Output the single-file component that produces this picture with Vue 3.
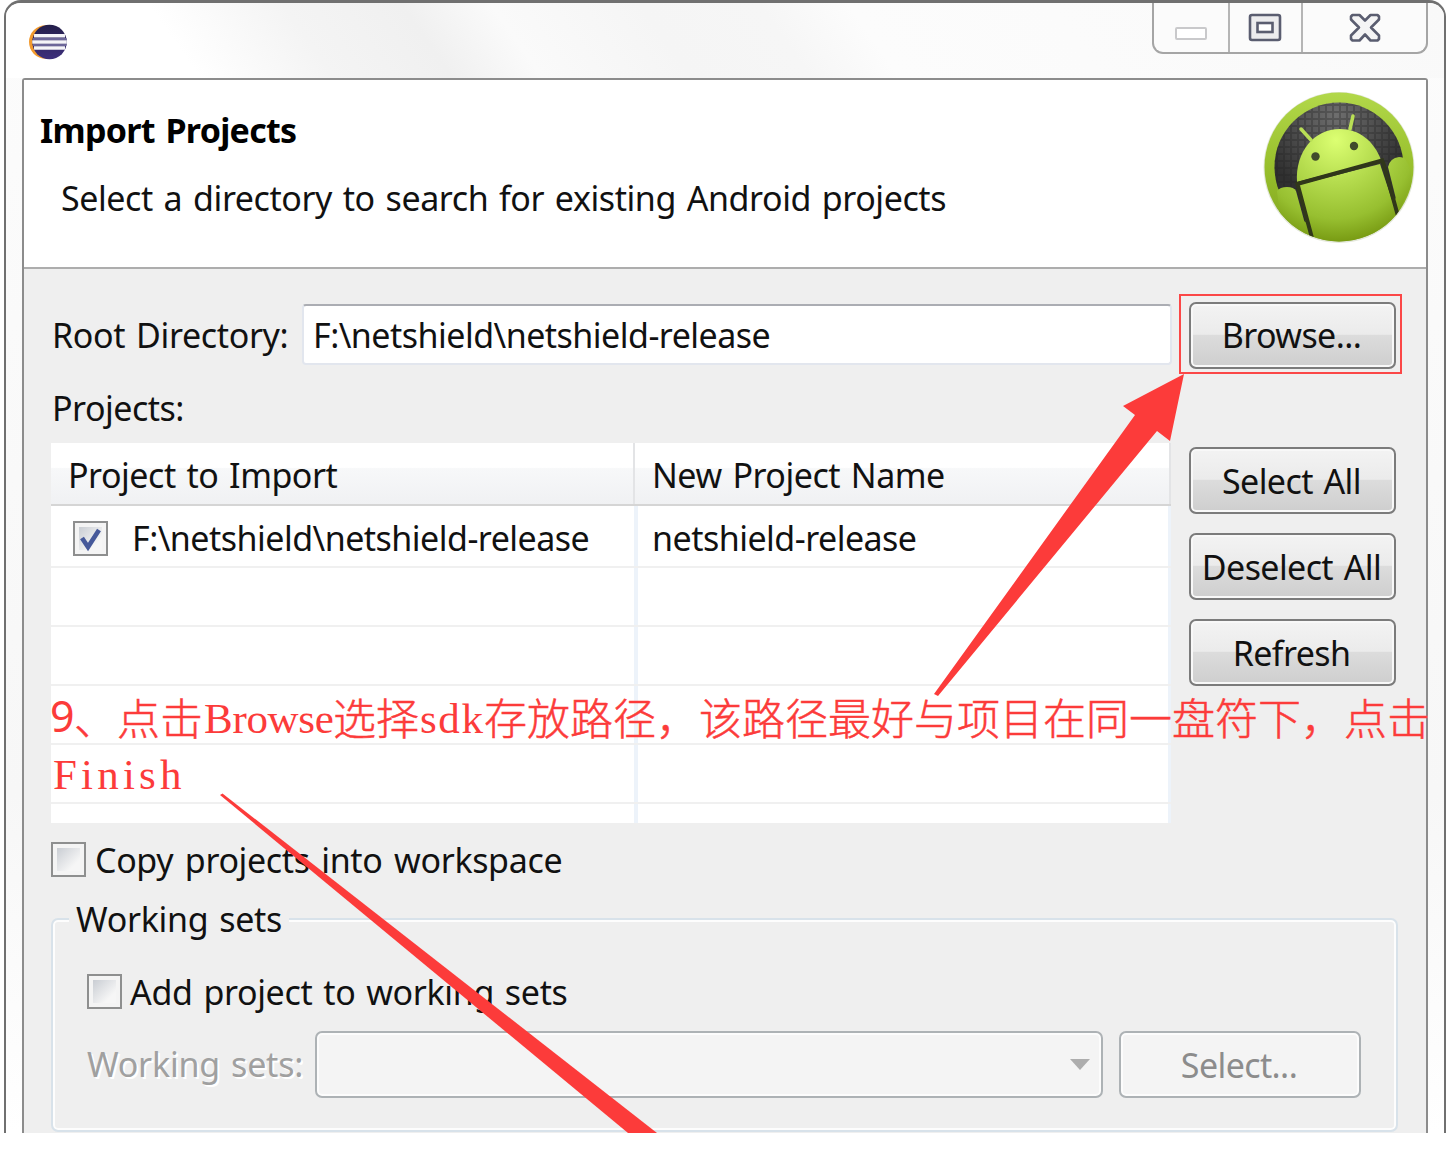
<script setup>
import { ref } from 'vue'

const directory = ref('F:\\netshield\\netshield-release')
const projects = [{ path: 'F:\\netshield\\netshield-release', name: 'netshield-release' }]
const emptyRows = 5
const actions = ['Select All', 'Deselect All', 'Refresh']
</script>

<template>
  <div class="stage">
    <div class="window">
      <div class="titlebar">
        <svg class="eclipse" width="42" height="38" viewBox="0 0 42 38">
          <defs>
            <linearGradient id="ecl" x1="0" y1="0" x2="0" y2="1">
              <stop offset="0" stop-color="#241f4a" />
              <stop offset="1" stop-color="#3d2f7c" />
            </linearGradient>
            <clipPath id="globe"><circle cx="22.500" cy="19" r="17.300" /></clipPath>
          </defs>
          <circle cx="18.800" cy="19" r="16.800" fill="#f29a2e" />
          <path d="M19 1H42V37H19Z" fill="#fff" />
          <circle cx="22.500" cy="19" r="17.300" fill="url(#ecl)" />
          <g clip-path="url(#globe)">
            <path d="M7 12.800H38M5 19H41M7 25H38" stroke="#f4f4f8" stroke-width="3.400" />
            <path d="M6 16H40M6 22H40" stroke="#6c6699" stroke-width="2" />
          </g>
        </svg>
        <div class="controls">
          <div class="ctl c1">
            <svg width="34" height="16" viewBox="0 0 34 16"><rect x="2" y="2" width="30" height="11" rx="1" fill="#fff" stroke="#c9c9cb" stroke-width="2" /></svg>
          </div>
          <div class="ctl c2">
            <svg width="34" height="30" viewBox="0 0 34 30">
              <rect x="2" y="2" width="30" height="25" rx="2" fill="#ececee" stroke="#5a5d70" stroke-width="2.600" />
              <rect x="9.500" y="10" width="15" height="9" fill="#fff" stroke="#5a5d70" stroke-width="2.600" />
            </svg>
          </div>
          <div class="ctl c3">
            <svg width="32" height="30" viewBox="0 0 32 30">
              <path d="M3.500 2H10.500L16 7.500L21.500 2H28.500L30 3.500V6.500L22 14.500L30 22.500V26L28.500 27.500H21.500L16 21.500L10.500 27.500H3.500L2 26V22.500L10 14.500L2 6.500V3.500Z" fill="#f4f4f5" stroke="#5a5d70" stroke-width="2.600" stroke-linejoin="round" />
            </svg>
          </div>
        </div>
      </div>

      <div class="client">
        <header class="banner">
          <div class="banner-text">
            <h1>Import Projects</h1>
            <p>Select a directory to search for existing Android projects</p>
          </div>
          <svg class="android" width="154" height="154" viewBox="0 0 154 154">
            <defs>
              <linearGradient id="rim" x1="0" y1="0" x2="0" y2="1">
                <stop offset="0" stop-color="#b2d84a" />
                <stop offset="0.500" stop-color="#98bf2c" />
                <stop offset="1" stop-color="#7ea31c" />
              </linearGradient>
              <radialGradient id="skin" gradientUnits="userSpaceOnUse" cx="74" cy="50" r="105">
                <stop offset="0" stop-color="#dcff72" />
                <stop offset="0.400" stop-color="#b5dc4e" />
                <stop offset="0.750" stop-color="#97bf30" />
                <stop offset="1" stop-color="#74960f" />
              </radialGradient>
              <radialGradient id="dark" gradientUnits="userSpaceOnUse" cx="74" cy="25" r="80">
                <stop offset="0" stop-color="#6e6e6e" />
                <stop offset="1" stop-color="#303030" />
              </radialGradient>
              <pattern id="mesh" width="7" height="7" patternUnits="userSpaceOnUse">
                <path d="M0 1H7M1 0V7" stroke="#222" stroke-opacity="0.300" stroke-width="2" />
              </pattern>
              <clipPath id="disc"><circle cx="77" cy="77" r="74.500" /></clipPath>
            </defs>
            <circle cx="77" cy="77.500" r="75.500" fill="#c8cfb5" opacity="0.500" />
            <circle cx="77" cy="77" r="74.500" fill="url(#rim)" />
            <circle cx="77" cy="77" r="64.500" fill="url(#dark)" />
            <circle cx="77" cy="77" r="64.500" fill="url(#mesh)" />
            <g clip-path="url(#disc)">
              <g fill="url(#skin)">
                <path d="M15 101Q18 97 25 97Q32 97 34 101L48 152L20 145Z" />
                <path d="M126 77Q128 68 137 67Q142 67 144 70Q151 82 149 96L137 121Z" />
                <path d="M36 95L118 74L136 128L110 160H50Z" />
                <path d="M35 92C33 62 52 39 78 39C97 39 112 51 119 70Z" />
              </g>
              <path d="M35 94L122 70M35 92L50 148M121 72L136 126" stroke="#30371a" stroke-width="4" fill="none" />
              <path d="M49 50L39 39M88 39L91 26" stroke="#b9df55" stroke-width="3.500" stroke-linecap="round" />
              <circle cx="53.500" cy="66.500" r="4.200" fill="#414a2c" />
              <circle cx="92" cy="56" r="4.200" fill="#414a2c" />
            </g>
          </svg>
        </header>

        <main class="body">
          <div class="dir-row">
            <label class="dir-label">Root Directory:</label>
            <div class="input"><span class="path">{{ directory }}</span></div>
            <button class="btn">Browse...</button>
          </div>
          <div class="projects-label">Projects:</div>
          <div class="projects">
            <div class="table">
              <div class="tr th">
                <div class="td">Project to Import</div>
                <div class="td">New Project Name</div>
              </div>
              <div v-for="p in projects" :key="p.path" class="tr first">
                <div class="td with-check">
                  <span class="check">
                    <svg width="27" height="27" viewBox="0 0 27 27"><path d="M5 13L11 22L22 5" fill="none" stroke="#46599a" stroke-width="4.600" /></svg>
                  </span>
                  <span class="path">{{ p.path }}</span>
                </div>
                <div class="td"><span class="path">{{ p.name }}</span></div>
              </div>
              <div v-for="n in emptyRows" :key="n" class="tr"><div class="td"></div><div class="td"></div></div>
            </div>
            <div class="actions">
              <button v-for="a in actions" :key="a" class="btn">{{ a }}</button>
            </div>
          </div>
          <label class="check-row copy"><span class="check"></span><span>Copy projects into workspace</span></label>
          <section class="group">
            <div class="legend">Working sets</div>
            <label class="check-row"><span class="check"></span><span>Add project to working sets</span></label>
            <div class="ws-row">
              <span class="ws-label">Working sets:</span>
              <div class="combo"><svg width="20" height="11" viewBox="0 0 20 11"><path d="M0 0H20L10 11Z" fill="#adadad" /></svg></div>
              <button class="btn disabled">Select...</button>
            </div>
          </section>
        </main>
      </div>

      <div class="highlight"></div>
      <svg class="arrows" width="1446" height="1133" viewBox="0 0 1446 1133">
        <path d="M1184 374L1170 441L1157 431L938 696L934 694L1135 415L1123 406Z" fill="#fc3b3a" />
        <path d="M220 795L222.500 793.500L657 1133H628Z" fill="#fc3b3a" />
      </svg>
      <div class="note">
        <div class="line"><span class="nine">9</span><span class="comma">、</span>点击<span class="latin browse">Browse</span>选择<span class="latin sdk">sdk</span>存放路径，该路径最好与项目在同一盘符下，点击</div>
        <div class="line second"><span class="latin finish">Finish</span></div>
      </div>
    </div>
  </div>
</template>

<style>
body { margin: 0; background: #fff; }
</style>

<style scoped>
.stage { width: 1446px; height: 1152px; overflow: hidden; background: #fff; font-family: "Noto Sans", "Open Sans", sans-serif; font-size: 34px; letter-spacing: -0.35px; word-spacing: 2.4px; color: #111; }
.stage * { box-sizing: border-box; }
.window { position: relative; width: 1442px; height: 1133px; margin-left: 4px; overflow: hidden; border: 2px solid #707070; border-top-width: 3px; border-bottom: 0; border-radius: 17px 17px 0 0; background: linear-gradient(180deg, #fcfcfc, #f7f7f7 70%, #fff); }
.titlebar { height: 75px; display: flex; justify-content: space-between; align-items: flex-start; padding-right: 16px; background: linear-gradient(55deg, #fff 0, #fff 13%, #f4f4f4 22%, #f0f0f0 30%, #fafafa 36%, #f5f5f5 46%, #f6f6f6 54%, #fcfcfc 60%, #f9f9f9 100%); }
.eclipse { margin: 20px 0 0 21px; }
.controls { display: flex; width: 276px; height: 51px; border: 2px solid #a5a5a5; border-top: 0; border-radius: 0 0 11px 11px; background: #fbfbfb; overflow: hidden; }
.ctl { display: flex; justify-content: center; border-right: 2px solid #b5b5b5; }
.c1 { width: 76px; padding-top: 23px; }
.c2 { width: 73px; padding: 10px 2px 0 0; }
.c3 { flex: 1; border-right: 0; padding-top: 10px; }
.client { width: 1406px; height: 1060px; margin-left: 16px; border: 2px solid #8c8c8c; border-radius: 3px 3px 0 0; background: #efefef; }
.banner { height: 189px; display: flex; justify-content: space-between; background: #fff; border-bottom: 2px solid #adadad; }
.banner-text { padding: 27px 0 0 16px; }
h1 { margin: 0; font-size: 34px; line-height: 46px; font-weight: 700; letter-spacing: -0.7px; color: #000; }
p { margin: 22px 0 0 21px; line-height: 46px; letter-spacing: -0.43px; }
.android { margin: 10px 10px 0 0; }
.body { padding: 33px 28px 0 27px; display: flex; flex-direction: column; }
.dir-row { display: flex; height: 66px; }
.dir-label { width: 251px; padding-left: 1px; line-height: 66px; }
.input { width: 870px; height: 61px; margin: 2px 17px 0 0; padding-left: 9px; line-height: 58px; background: #fff; border: 2px solid #e2e6ee; border-top-color: #abadb3; border-radius: 4px; }
.path { letter-spacing: -0.52px; }
.btn { width: 207px; height: 67px; padding: 0 2px 0 0; font: inherit; letter-spacing: -0.6px; word-spacing: 2.4px; color: #111; border: 2px solid #7b7b7b; border-radius: 7px; box-shadow: inset 0 0 0 2px #f8f8f8; background: linear-gradient(#f3f3f3 0, #ebebeb 48%, #dcdcdc 50%, #cecece 100%); display: flex; align-items: center; justify-content: center; }
.dir-row .btn { padding-bottom: 1px; }
.projects-label { height: 75px; padding: 6px 0 0 1px; line-height: 68px; letter-spacing: -0.5px; }
.projects { display: flex; gap: 18px; height: 380px; }
.table { width: 1120px; height: 380px; overflow: hidden; background: #fff; }
.tr { display: flex; height: 59px; border-bottom: 2px solid #f0f0f0; }
.tr.first { height: 62px; }
.first .path { padding-top: 3px; }
.td { display: flex; align-items: center; width: 536px; padding-left: 14px; border-right: 3px solid #edf3fa; }
.td:first-child { flex: none; width: 587px; padding-left: 17px; border-right-width: 4px; }
.td.with-check:first-child { padding-left: 22px; }
.with-check .check { margin: 5px 24px 0 0; }
.th { height: 63px; border-bottom-color: #d5d5d5; background: linear-gradient(#fff 0, #fff 40%, #f7f8f9 42%, #f0f1f3 100%); }
.th .td { border-right: 2px solid #e3e4e6; width: 536px; padding: 3px 0 0 17px; letter-spacing: -0.48px; }
.th .td:first-child { width: 584px; border-right: 2px solid #e3e4e6; }
.actions { display: flex; flex-direction: column; gap: 19px; padding-top: 4px; }
.check { flex: none; display: block; width: 35px; height: 35px; padding: 2px; border: 2px solid #8e8f8f; background: linear-gradient(135deg, #c9cdd3, #f6f6f6 75%) 4px 4px / 23px 23px no-repeat #f4f4f4; }
.check svg { display: block; }
.check-row { display: flex; align-items: center; height: 35px; margin-top: 19px; gap: 9px; }
.copy { word-spacing: 3.1px; }
.group { margin-top: 41px; width: 1347px; height: 214px; border: 2px solid #d8e2ea; border-radius: 7px; box-shadow: inset 0 0 0 2px #fdfdfd; padding-left: 34px; }
.legend { height: 40px; width: 220px; margin: -21px 0 0 -18px; padding-left: 7px; line-height: 40px; letter-spacing: -0.3px; background: #efefef; }
.group .check-row { margin-top: 35px; gap: 8px; }
.ws-row { display: flex; margin-top: 22px; height: 67px; }
.ws-label { width: 228px; line-height: 67px; letter-spacing: -0.2px; color: #a0a0a0; text-shadow: 2px 2px 0 #fff; }
.combo { width: 788px; margin-right: 16px; display: flex; align-items: center; justify-content: flex-end; padding-right: 11px; border: 2px solid #adb2b5; border-radius: 7px; background: #f4f4f4; box-shadow: inset 0 0 0 2px #fcfcfc; }
.btn.disabled { width: 242px; color: #8c8c8c; background: #f4f4f4; border-color: #adb2b5; box-shadow: inset 0 0 0 2px #fcfcfc; }
.highlight { position: absolute; left: 1173px; top: 291px; width: 223px; height: 80px; border: 2px solid #fb4747; }
.arrows { position: absolute; left: -6px; top: -3px; pointer-events: none; }
.note { position: absolute; left: 44px; top: 682px; color: #fc3b3a; font: 300 43px/62px "Noto Sans CJK SC", sans-serif; letter-spacing: 0; word-spacing: 0; -webkit-text-stroke: 0.5px #fc3b3a; }
.line { display: flex; white-space: nowrap; height: 62px; }
.nine { width: 24px; font: 400 43px/62px "Noto Sans", sans-serif; -webkit-text-stroke: 0; }
.comma { width: 43px; }
.latin { padding-top: 3px; font-family: "Liberation Serif", serif; -webkit-text-stroke: 0; }
.browse { width: 130px; padding-left: 1px; letter-spacing: -0.3px; }
.sdk { width: 65px; padding-left: 1px; letter-spacing: 1.6px; }
.second { padding-left: 3px; height: 50px; margin-top: -6px; }
.finish { letter-spacing: 4.2px; }
</style>
